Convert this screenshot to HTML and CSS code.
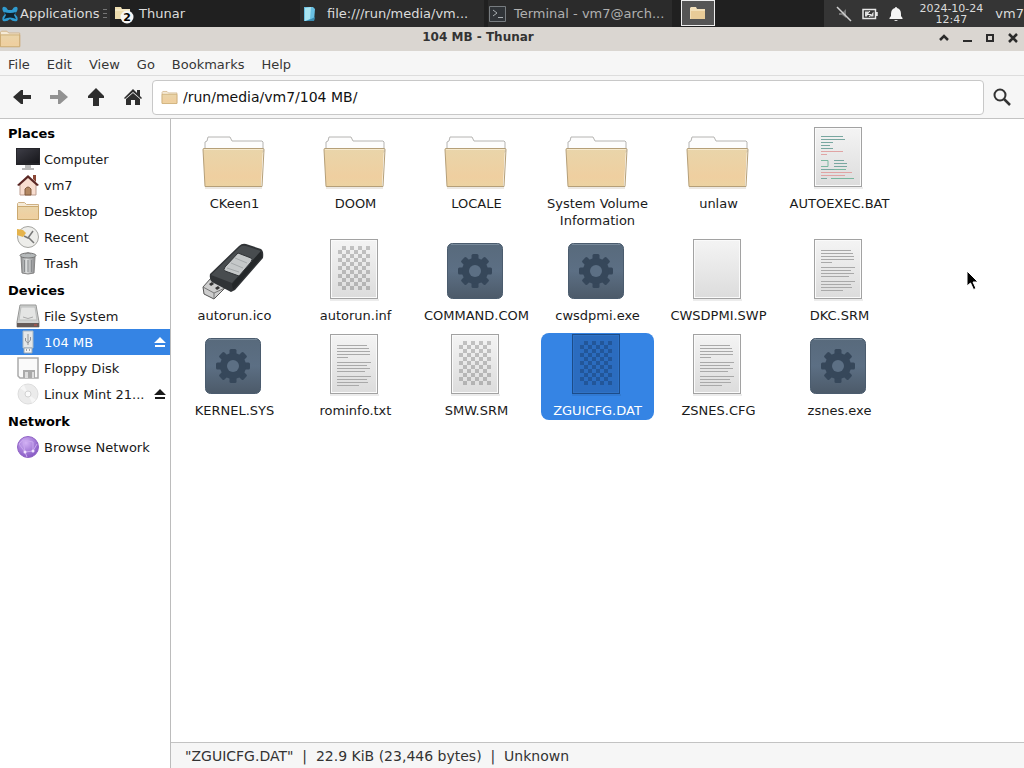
FILE: index.html
```html
<!DOCTYPE html>
<html lang="en">
<head>
  <meta charset="UTF-8">
  <title>104 MB - Thunar</title>
  <link rel="stylesheet" href="styles.css">
</head>
<body>
  <!-- shared icons -->
  <svg class="defs" width="0" height="0" aria-hidden="true">
    <defs>
      <linearGradient id="g-folder" x1="0" y1="0" x2="0" y2="1">
        <stop offset="0" stop-color="#e9d5aa"/><stop offset="0.75" stop-color="#efcfa0"/><stop offset="1" stop-color="#ecd3a2"/>
      </linearGradient>
      <linearGradient id="g-paper" x1="0" y1="0" x2="0" y2="1">
        <stop offset="0" stop-color="#f4f4f4"/><stop offset="1" stop-color="#dcdcdc"/>
      </linearGradient>
      <linearGradient id="g-gear" x1="0" y1="0" x2="0" y2="1">
        <stop offset="0" stop-color="#586a7c"/><stop offset="0.5" stop-color="#5c6f84"/><stop offset="1" stop-color="#4c5a69"/>
      </linearGradient>
      <linearGradient id="g-screen" x1="0" y1="0" x2="1" y2="1">
        <stop offset="0" stop-color="#3d3d46"/><stop offset="1" stop-color="#17171b"/>
      </linearGradient>
      <linearGradient id="g-metal" x1="0" y1="0" x2="1" y2="0">
        <stop offset="0" stop-color="#8b8d8e"/><stop offset="0.4" stop-color="#dcdede"/><stop offset="1" stop-color="#88898b"/>
      </linearGradient>
      <radialGradient id="g-globe" cx="0.4" cy="0.3" r="0.7">
        <stop offset="0" stop-color="#d3b2f5"/><stop offset="1" stop-color="#8659c4"/>
      </radialGradient>
      <pattern id="p-check" x="16" y="8" width="8" height="8" patternUnits="userSpaceOnUse">
        <rect class="check" x="4" width="4" height="4"/><rect class="check" y="4" width="4" height="4"/>
      </pattern>
    </defs>

    <symbol id="folder" viewBox="0 0 64 64">
      <path d="M4 26V16l2-1 1-4h22l2 4h30l1 1v10z" fill="#fdfdfd" stroke="#b5b4b2"/>
      <path d="M2 22.500h60l-2 38H4z" fill="url(#g-folder)"/>
      <path d="M4 60.500 2 23.500q0-1 1-1h59q1 0 1 1l-2 37z" fill="none" stroke="#b59f78"/>
      <path d="M3 23.500h59" stroke="#f6e9cc"/>
      <path d="M4 62h57" stroke="#d9d2c6"/>
    </symbol>
    <symbol id="folder-small" viewBox="0 0 24 24">
      <path d="M1.500 20V4.500l1-1h6l2 2h12V20z" fill="#f5ead6" stroke="#cfb184"/>
      <path d="M1.500 7.500h21v13h-21z" fill="url(#g-folder)" stroke="#cba970"/>
    </symbol>
    <symbol id="paper" viewBox="0 0 64 64">
      <path d="M8 62h49" stroke="#000" stroke-opacity="0.15"/>
      <rect class="sheet" x="8.500" y="1.500" width="47" height="59"/>
      <rect class="sheet-inner" x="9.500" y="2.500" width="45" height="57"/>
    </symbol>
    <symbol id="text" viewBox="0 0 64 64">
      <use href="#paper"/>
      <path d="M15 12.500h30M15 15.500h32M15 18.500h33M15 21.500h33M15 24.500h11M15 29.500h34M15 32.500h30M15 35.500h33M15 38.500h28M15 43.500h34M15 46.500h30M15 49.500h31M15 52.500h22" stroke="#a9a9a9"/>
    </symbol>
    <symbol id="script" viewBox="0 0 64 64">
      <use href="#paper"/>
      <path d="M15 10.500h22M15 13.500h24M15 16.500h12M15 19.500h9M15 22.500h12M28 34.500h10M28 37.500h13M28 40.500h13M15 43.500h24M15 52.500h6" stroke="#78a7a0"/>
      <path d="M15 25.500h22M15 28.500h6M15 46.500h31M15 49.500h24" stroke="#e0a4a4"/>
      <path d="M15 34.500h7v6h-7M28 43.500h12M25 52.500h23" fill="none" stroke="#79b79f"/>
    </symbol>
    <symbol id="binary" viewBox="0 0 64 64">
      <use href="#paper"/>
      <rect x="16" y="8" width="32" height="44" fill="url(#p-check)"/>
    </symbol>
    <symbol id="gear" viewBox="0 0 64 64">
      <rect x="4.500" y="5.500" width="55" height="55" rx="5" fill="url(#g-gear)" stroke="#4b5c6e"/>
      <path d="M8 6.500h48" stroke="#788a9b"/>
      <g fill="#36475a">
        <rect id="tooth" x="28.500" y="16" width="7" height="34" rx="1.500"/>
        <use href="#tooth" transform="rotate(45 32 33)"/>
        <use href="#tooth" transform="rotate(90 32 33)"/>
        <use href="#tooth" transform="rotate(135 32 33)"/>
        <circle cx="32" cy="33" r="13"/>
      </g>
      <circle cx="32" cy="33" r="6" fill="#5c6f84"/>
    </symbol>
    <symbol id="usb-stick" viewBox="0 0 64 64">
      <path d="m10 40 14 10-11 11-10-5-1-7z" fill="#cdcdcd" stroke="#555"/>
      <path d="m2 49 11 6 11-5M13 55v6" fill="none" stroke="#777"/>
      <path d="m8 46 3-2 2 2-3 2zM14 50l3-2 2 2-3 2z" fill="#333"/>
      <path d="M9 36 38 8q3-3 7-2l15 5q3 2 2 9L34 52l-4 2-19-10q-3-3-2-8z" fill="#303336"/>
      <path d="M10 37 39 9q2-2 6-1l15 5-29 32z" fill="#484c4f"/>
      <path d="m31 46 29-33 1 6-29 33z" fill="#242729"/>
      <path d="m37 15 13 5q2 1 0 4L38 38l-14-5q-2-1 0-4z" fill="#c5c8c9" stroke="#303336"/>
      <path d="m34 20 12 5M30 25l12 5M26 30l12 4" stroke="#a4a8aa"/>
    </symbol>
    <symbol id="eject" viewBox="0 0 12 12">
      <path d="M6 1 12 7H0zM1 9h10v2H1z" fill="currentColor"/>
    </symbol>
  </svg>

  <header class="panel">
    <button class="apps">
      <svg width="16" height="20" viewBox="0 0 16 20"><path d="M1 3q3-1 5 3h4q2-4 5-3 2 3-2 7 4 4 2 7-4 1-7-2-3 3-7 2-2-3 2-7-4-4-2-7z" fill="#2f9bd0"/><path d="M2 8q6 2 12 0l-2 3 2 4q-6-3-12 0l2-4z" fill="#10232e"/></svg>
      Applications
      <svg class="grip" width="4" height="10" viewBox="0 0 4 10"><path d="M0 .500h4M0 4.500h4M0 8.500h4" stroke="#777"/></svg>
    </button>
    <button class="task group">
      <svg width="20" height="20" viewBox="0 0 20 20"><path d="M1 15V3h6l1 2h8v10z" fill="#ecdcae"/><path d="M1 6h15" stroke="#fbf3dc"/><circle cx="13" cy="13" r="6.500" fill="#f5f5f5"/><text x="13" y="17" class="badge-text">2</text></svg>
      Thunar
    </button>
    <button class="task wide">
      <svg width="16" height="16" viewBox="0 0 16 16"><path d="M3 1h9l2 2-1 12H3z" fill="#69bfe2"/><path d="m4 2 6-1-1 12-5 2z" fill="#a9e4f1"/><path d="m10 13 4-2-1 4H5z" fill="#3989ae"/></svg>
      <span>file:///run/media/vm...</span>
    </button>
    <button class="task wide dim">
      <svg width="18" height="18" viewBox="0 0 18 18"><path d="M.500 1.500h16v15H.500z" fill="#303438" stroke="#777c80"/><path d="m4 5 4 3-4 3M9 12.500h5" fill="none" stroke="#a9aeb1"/></svg>
      <span>Terminal - vm7@arch...</span>
    </button>
    <button class="task active" aria-label="104 MB - Thunar">
      <svg width="16" height="14" viewBox="0 0 16 14"><path d="M0 13V2l1-1h5l1 2h8v10z" fill="#f2dfb9"/><path d="M1 5h14v8H1z" fill="#e8cb98"/></svg>
    </button>
    <div class="tray">
      <svg width="16" height="16" viewBox="0 0 16 16"><path d="M3 7h3l4-4v9L6 9H3z" fill="#777"/><path d="m1 1 14 14" stroke="#d0d0d0" stroke-width="1.500"/></svg>
      <svg width="17" height="12" viewBox="0 0 17 12"><path d="M1 1.500h12.500v9H1zM15 4v4" fill="none" stroke="#e8e8e8" stroke-width="1.500"/><path d="M3 3.500h4L5 8.500H3zM11.500 3.500v5H8z" fill="#ddd"/><path d="M8 3 5 6.500h4L7 9" fill="none" stroke="#eee"/></svg>
      <svg width="14" height="16" viewBox="0 0 14 16"><path d="M7 1q1 0 1 1 4 1 4 6v2l1.500 2v1H.500v-1L2 10V8q0-5 4-6 0-1 1-1zM5 14h4q-2 2-4 0z" fill="#f4f4f4"/></svg>
    </div>
    <time class="clock" datetime="2024-10-24T12:47">2024-10-24<br>12:47</time>
    <span class="user">vm7</span>
  </header>

  <div class="titlebar">
    <svg width="22" height="20" viewBox="1 2 24 20"><use href="#folder-small" width="24" height="24"/></svg>
    <h1>104 MB - Thunar</h1>
    <div class="window-buttons">
      <button aria-label="Shade"><svg width="12" height="12" viewBox="0 0 12 12"><path d="m2 8 4-4 4 4" fill="none" stroke="#2b2b2b" stroke-width="2.500"/></svg></button>
      <button aria-label="Minimize"><svg width="12" height="12" viewBox="0 0 12 12"><path d="M2 9h9" stroke="#2b2b2b" stroke-width="2"/></svg></button>
      <button aria-label="Maximize"><svg width="12" height="12" viewBox="0 0 12 12"><path d="M3 3h6v6H3z" fill="none" stroke="#2b2b2b" stroke-width="2"/></svg></button>
      <button aria-label="Close"><svg width="12" height="12" viewBox="0 0 12 12"><path d="m2 2 8 8m0-8-8 8" stroke="#2b2b2b" stroke-width="2.500"/></svg></button>
    </div>
  </div>

  <nav class="menubar">
    <button>File</button>
    <button>Edit</button>
    <button>View</button>
    <button>Go</button>
    <button>Bookmarks</button>
    <button>Help</button>
  </nav>

  <div class="toolbar">
    <button aria-label="Back"><svg width="20" height="20" viewBox="0 0 20 20"><path d="M1 10 9 3h2v5h8v4h-8v5H9z" fill="#2e2e2e"/></svg></button>
    <button aria-label="Forward" disabled><svg width="20" height="20" viewBox="0 0 20 20"><path d="m19 10-8-7H9v5H1v4h8v5h2z" fill="#929292"/></svg></button>
    <button aria-label="Up"><svg width="20" height="20" viewBox="0 0 20 20"><path d="m10 1 8 8v2h-5v8H7v-8H2V9z" fill="#2e2e2e"/></svg></button>
    <button aria-label="Home"><svg width="20" height="20" viewBox="0 0 20 20"><path d="m10 2 4 4V3h3v6l2 2-1 1-8-7-8 7-1-1zM3 12l7-6 7 6v6h-5v-5H8v5H3z" fill="#2e2e2e"/></svg></button>
    <label class="location">
      <svg width="17" height="17"><use href="#folder-small"/></svg>
      <input type="text" value="/run/media/vm7/104 MB/" aria-label="Location">
    </label>
    <button class="search" aria-label="Search"><svg width="20" height="20" viewBox="0 0 20 20"><circle cx="8" cy="8" r="5.500" fill="none" stroke="#333" stroke-width="2"/><path d="m12 12 6 6" stroke="#333" stroke-width="2.500"/></svg></button>
  </div>

  <div class="main">
    <aside class="sidebar">
      <h2>Places</h2>
      <a href="#"><svg width="24" height="24" viewBox="0 0 24 24"><path d="M0 1h24v17H0z" fill="#25252a"/><path d="M1 2h22v14H1z" fill="url(#g-screen)"/><path d="M9 18h6v3h3v2H6v-2h3z" fill="#bbb"/></svg>Computer</a>
      <a href="#"><svg width="24" height="24" viewBox="0 0 24 24"><path d="M4 11 12 3l8 8v11H4z" fill="#f8ded0" stroke="#be9f91"/><path d="M17 2h3v7l-3-3z" fill="#8b4635"/><path d="m1 12 11-10 11 10-2 1-9-8-9 8z" fill="#5a2724"/><path d="M9 22v-6q3-4 6 0v6z" fill="#b28761" stroke="#805b3f"/></svg>vm7</a>
      <a href="#"><svg width="24" height="24"><use href="#folder-small"/></svg>Desktop</a>
      <a href="#"><svg width="24" height="24" viewBox="0 0 24 24"><circle cx="12" cy="12" r="10.500" fill="#ededea" stroke="#a6a6a2"/><path d="M17 6 12 13l-4-2M13 13l5 5" fill="none" stroke="#777" stroke-width="1.500"/><path d="M1 10V4l6 1 3 3-3 4z" fill="#e5b34b"/></svg>Recent</a>
      <a href="#"><svg width="24" height="24" viewBox="0 0 24 24"><path d="M5 6h14l-1 16q-6 2-12 0z" fill="url(#g-metal)" stroke="#858585"/><path d="M8.500 9v12M12 9v12M15.500 9v12" stroke="#898c8e"/><ellipse cx="12" cy="4.500" rx="8" ry="2.500" fill="#b5b9ba" stroke="#777"/><path d="M9 3q3-3 6 0" fill="none" stroke="#888"/></svg>Trash</a>
      <h2>Devices</h2>
      <a href="#"><svg width="24" height="24" viewBox="0 0 24 24"><path d="M4 1h16l3 17v5H1v-5z" fill="#d0d2d1" stroke="#969796"/><path d="M5 3h14l2 13H3z" fill="#e4e5e4" stroke="#bcbebd"/><path d="M1 19h22v4H1z" fill="#665b58"/><path d="M18 21h3" stroke="#d35546"/><path d="M7 13q5 3 10 0" fill="none" stroke="#aaa"/></svg>File System</a>
      <a href="#" class="current"><svg width="24" height="24" viewBox="0 0 24 24"><path d="M7 1h10v17H7z" fill="#e4e7e8" stroke="#a9b8c4"/><path d="M8 18h8v5H8z" fill="#f3f3f3" stroke="#98a7b4"/><path d="M12 4v11M9.500 8v3l2.500 2 2.500-3V7" fill="none" stroke="#929598"/><path d="M10 20h1m2 0h1" stroke="#555"/></svg>104 MB<svg class="eject" width="12" height="12"><use href="#eject"/></svg></a>
      <a href="#"><svg width="24" height="24" viewBox="0 0 24 24"><path d="M2 2h20v20H4l-2-2z" fill="#fafafa" stroke="#aaa" stroke-width="1.500"/><path d="M7 22v-8h12v8z" fill="#aaa"/><path d="M9 16h3v6H9zM16 16h2v6h-2z" fill="#dedede"/></svg>Floppy Disk</a>
      <a href="#"><svg width="24" height="24" viewBox="0 0 24 24"><circle cx="12" cy="12" r="10" fill="#ebebeb" stroke="#ddd"/><path d="m12 12-8-6 4-3zM12 12l8 6-4 3z" fill="#f6f6f6"/><circle cx="12" cy="12" r="3" fill="#fafafa" stroke="#d2d2d2"/></svg>Linux Mint 21...<svg class="eject" width="12" height="12"><use href="#eject"/></svg></a>
      <h2>Network</h2>
      <a href="#"><svg width="24" height="24" viewBox="0 0 24 24"><circle cx="12" cy="12" r="10.500" fill="url(#g-globe)" stroke="#9265c6"/><path d="m3 9 6 8 8-1 4-7M9 17 7 5l10 2v9M7 5 3 9M9 17l2 5" fill="none" stroke="#c9a8ee"/><circle cx="9" cy="17" r="1.500" fill="#f1e5ff"/><circle cx="17" cy="16" r="1.500" fill="#f1e5ff"/></svg>Browse Network</a>
    </aside>

    <section class="content">
      <div class="files">
        <button class="file"><svg><use href="#folder"/></svg>CKeen1</button>
        <button class="file"><svg><use href="#folder"/></svg>DOOM</button>
        <button class="file"><svg><use href="#folder"/></svg>LOCALE</button>
        <button class="file"><svg><use href="#folder"/></svg>System Volume Information</button>
        <button class="file"><svg><use href="#folder"/></svg>unlaw</button>
        <button class="file"><svg><use href="#script"/></svg>AUTOEXEC.BAT</button>
        <button class="file"><svg><use href="#usb-stick"/></svg>autorun.ico</button>
        <button class="file"><svg><use href="#binary"/></svg>autorun.inf</button>
        <button class="file"><svg><use href="#gear"/></svg>COMMAND.COM</button>
        <button class="file"><svg><use href="#gear"/></svg>cwsdpmi.exe</button>
        <button class="file"><svg><use href="#paper"/></svg>CWSDPMI.SWP</button>
        <button class="file"><svg><use href="#text"/></svg>DKC.SRM</button>
        <button class="file"><svg><use href="#gear"/></svg>KERNEL.SYS</button>
        <button class="file"><svg><use href="#text"/></svg>rominfo.txt</button>
        <button class="file"><svg><use href="#binary"/></svg>SMW.SRM</button>
        <button class="file selected"><svg><use href="#binary"/></svg>ZGUICFG.DAT</button>
        <button class="file"><svg><use href="#text"/></svg>ZSNES.CFG</button>
        <button class="file"><svg><use href="#gear"/></svg>zsnes.exe</button>
      </div>
      <footer class="statusbar">"ZGUICFG.DAT"  |  22.9 KiB (23,446 bytes)  |  Unknown</footer>
    </section>
  </div>

  <svg class="pointer" width="13" height="21" viewBox="0 0 13 21"><path d="M1 1v15l3.500-3 3 6.500 2.500-1-3-6.500h5z" fill="#000" stroke="#fff"/></svg>
</body>
</html>
```

FILE: styles.css
```css
* {
  box-sizing: border-box;
}
body {
  margin: 0;
  height: 100vh;
  display: flex;
  flex-direction: column;
  overflow: hidden;
  background: #f6f6f6;
  color: #1a1a1a;
  font: 13px/17px "DejaVu Sans", sans-serif;
}
button {
  border: 0;
  padding: 0;
  background: none;
  color: inherit;
  font: inherit;
}
svg {
  display: block;
  flex-shrink: 0;
}
.defs {
  height: 0;
}

/* desktop panel */
.panel {
  display: flex;
  height: 27px;
  flex-shrink: 0;
  background: #202020;
  color: #dcdcdc;
  white-space: nowrap;
}
.apps {
  display: flex;
  align-items: center;
  width: 110px;
  padding-left: 2px;
  gap: 2px;
  background: #303030;
}
.grip {
  margin-left: 2px;
}
.task {
  display: flex;
  align-items: center;
  gap: 10px;
  flex-shrink: 0;
}
.group {
  width: 190px;
  gap: 5px;
  padding-left: 4px;
}
.wide {
  width: 188px;
  padding-left: 1px;
  background: #2b2b2b;
  border-right: 4px solid #202020;
}
.dim {
  color: #b0b0b0;
  gap: 7px;
}
.active {
  width: 34px;
  height: 26px;
  margin-left: 5px;
  justify-content: center;
  background: #555;
  border: 1px solid #eee;
}
.badge-text {
  font-size: 11px;
  font-weight: bold;
  text-anchor: middle;
}
.tray {
  display: flex;
  align-items: center;
  gap: 10px;
  margin-left: auto;
  padding: 0 8px 0 12px;
  background: #353535;
}
.clock {
  width: 80px;
  padding-top: 3px;
  background: #353535;
  font-size: 11px;
  line-height: 11px;
  text-align: center;
}
.user {
  padding: 5px 0 0 4px;
  background: #353535;
}

/* window */
.titlebar {
  display: flex;
  align-items: center;
  height: 24px;
  flex-shrink: 0;
  background: #dad6d1;
  color: #333;
}
.titlebar h1 {
  flex: 1;
  margin: 0;
  padding: 0 4px 3px 0;
  font-size: 12px;
  line-height: 17px;
  text-align: center;
}
.window-buttons {
  display: flex;
  gap: 11px;
  padding: 0 5px 3px 0;
}
.menubar {
  display: flex;
  gap: 17px;
  height: 25px;
  flex-shrink: 0;
  padding: 2px 8px 0;
  color: #363636;
  border-bottom: 1px solid #ddd;
}
.toolbar {
  display: flex;
  align-items: center;
  gap: 17px;
  height: 43px;
  flex-shrink: 0;
  padding: 0 12px;
  border-bottom: 1px solid #c3c3c3;
}
.location {
  display: flex;
  align-items: center;
  flex: 1;
  gap: 5px;
  height: 35px;
  margin-left: -8px;
  margin-right: -9px;
  padding: 0 8px;
  background: #fff;
  border: 1px solid #c8c8c8;
  border-radius: 4px;
}
.location input {
  flex: 1;
  border: 0;
  padding: 0;
  outline: 0;
  background: none;
  color: #111;
  font: inherit;
  font-size: 14px;
}

.main {
  display: flex;
  flex: 1;
  min-height: 0;
}
.sidebar {
  width: 171px;
  flex-shrink: 0;
  background: #fff;
  border-right: 1px solid #bcbcbc;
}
.sidebar h2 {
  margin: 0;
  padding: 6px 8px 4px;
  color: #000;
  font-size: 13px;
  line-height: 17px;
}
.sidebar a {
  display: flex;
  align-items: center;
  gap: 4px;
  height: 26px;
  padding: 0 4px 0 16px;
  color: #1a1a1a;
  text-decoration: none;
  white-space: nowrap;
}
.sidebar .current {
  background: #3584e4;
  color: #fff;
}
.eject {
  margin-left: auto;
}

.content {
  display: flex;
  flex-direction: column;
  flex: 1;
  background: #fff;
}
.files {
  display: flex;
  flex: 1;
  flex-wrap: wrap;
  align-content: flex-start;
  gap: 8px;
  padding: 7px 16px 7px 7px;
}
.file {
  display: flex;
  flex-direction: column;
  align-items: center;
  gap: 5px;
  width: 113px;
  padding-bottom: 1px;
  border-radius: 8px;
}
.file svg {
  width: 64px;
  height: 64px;
  margin-right: 3px;
}
.sheet {
  fill: var(--sheet, url(#g-paper));
  stroke: var(--sheet-border, #a2a2a2);
}
.sheet-inner {
  fill: none;
  stroke: var(--sheet-shine, #fafafa);
}
.check {
  fill: #000;
  fill-opacity: 0.2;
}
.selected {
  --sheet: #2b6cbf;
  --sheet-border: #1c4c89;
  --sheet-shine: #3073c6;
  background: #3584e4;
  color: #fff;
}
.statusbar {
  height: 26px;
  padding: 5px 14px;
  border-top: 1px solid #c3c3c3;
  background: #f6f6f6;
  color: #333;
  font-size: 14px;
  white-space: pre;
}

.pointer {
  position: absolute;
  left: 966px;
  top: 270px;
}
```
